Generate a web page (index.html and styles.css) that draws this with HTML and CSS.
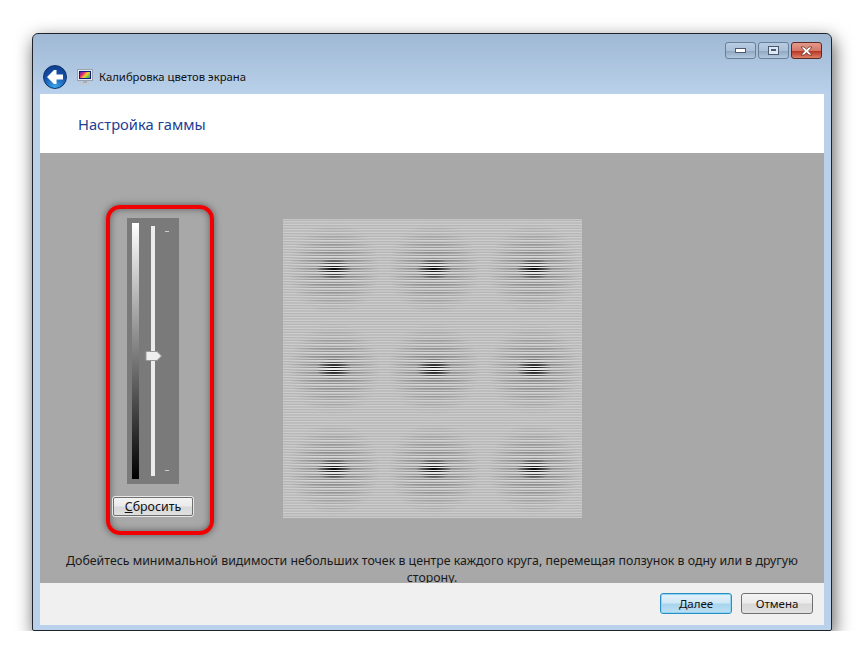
FILE: index.html
```html
<!DOCTYPE html>
<html lang="ru">
<head>
    <meta charset="UTF-8">
    <title>Калибровка цветов экрана</title>
    <link rel="stylesheet" href="styles.css">
</head>
<body>
    <div class="window">
        <div class="caption-buttons">
            <div class="cap-btn">
                <svg width="11" height="5" viewBox="0 0 11 5"><rect x="0.5" y="0.5" width="10" height="4" fill="#fff" stroke="#4a5a70"/></svg>
            </div>
            <div class="cap-btn">
                <svg width="11" height="9" viewBox="0 0 11 9"><rect x="0.5" y="0.5" width="10" height="8" fill="#dfe8f2" stroke="#4a5a70"/><rect x="3" y="3" width="5" height="2" fill="#4a5a70"/></svg>
            </div>
            <div class="cap-btn close">
                <svg width="13" height="10" viewBox="0 0 13 10"><path d="M1 1h3l2.500 2.300L9 1h3L8.500 5 12 9H9L6.500 6.700 4 9H1l3.500-4z" fill="#fff" stroke="#5c2a24" stroke-width="0.7"/></svg>
            </div>
        </div>
        <div class="nav-row">
            <div class="back-btn">
                <svg width="18" height="16" viewBox="0 0 18 16"><path d="M8 1 1 8l7 7h2.500V10.500H17v-5H10.500V1z" fill="#fff"/></svg>
            </div>
            <svg class="app-icon" width="16" height="16" viewBox="0 0 16 16">
                <defs>
                    <linearGradient id="rainbow" x1="0" y1="0" x2="1" y2="0.6">
                        <stop offset="0" stop-color="#2030d0"/>
                        <stop offset="0.35" stop-color="#e02070"/>
                        <stop offset="0.65" stop-color="#f0d030"/>
                        <stop offset="1" stop-color="#30c050"/>
                    </linearGradient>
                </defs>
                <rect x="0.5" y="0.500" width="15" height="11" fill="#e8ebee" stroke="#9aa2ac"/>
                <rect x="2.500" y="2.500" width="11" height="7" fill="url(#rainbow)" stroke="#101c80"/>
                <rect x="6" y="12" width="4" height="2" fill="#a8aeb4"/>
                <rect x="3" y="14" width="10" height="1.500" fill="#c4c8cc"/>
            </svg>
            <span class="app-title">Калибровка цветов экрана</span>
        </div>
        <div class="client">
            <div class="page-head">
                <h1>Настройка гаммы</h1>
            </div>
            <div class="stage">
                <div class="stage-row">
                    <div class="highlight">
                        <div class="slider-panel">
                            <div class="ramp"></div>
                            <div class="track">
                                <svg class="thumb" width="17" height="10" viewBox="0 0 17 10"><path d="M1 0.500h11l4.500 4.500L12 9.500H1z" fill="#eee" stroke="#999"/></svg>
                            </div>
                            <div class="ticks"><i></i><i></i></div>
                        </div>
                        <button class="btn reset"><u>С</u>бросить</button>
                    </div>
                    <div class="pattern">
                        <div class="dots"></div>
                    </div>
                </div>
                <p class="hint">Добейтесь минимальной видимости небольших точек в центре каждого круга, перемещая ползунок в одну или в другую сторону.</p>
            </div>
            <div class="footer">
                <button class="btn primary">Далее</button>
                <button class="btn">Отмена</button>
            </div>
        </div>
    </div>
</body>
</html>
```

FILE: styles.css
```css
body {
    margin: 0;
    background: #fff;
    font-family: "Noto Sans", "Open Sans", sans-serif;
    font-size: 12px;
    color: #1a1a1a;
}

.window {
    position: relative;
    box-sizing: border-box;
    width: 800px;
    height: 598px;
    margin: 33px 0 0 32px;
    padding: 0 7px 6px 7px;
    border: 1px solid #20242a;
    border-radius: 6px 6px 2px 2px;
    background: linear-gradient(#9fb8d4 0, #b9d1ea 60px, #b9d1ea 100%);
    box-shadow: 2px 6px 18px rgba(0, 0, 0, 0.65);
}

.caption-buttons {
    position: absolute;
    top: 8px;
    right: 9px;
    display: flex;
    gap: 2px;
}

.cap-btn {
    box-sizing: border-box;
    width: 31px;
    height: 17px;
    display: flex;
    align-items: center;
    justify-content: center;
    border: 1px solid #6a7f98;
    border-radius: 3px;
    background: linear-gradient(#b8cce2 0, #abc0d8 50%, #92a8c0 55%, #b2c8e0 100%);
}

.cap-btn.close {
    border-color: #5c2a24;
    background: linear-gradient(#e59a8a 0, #d4786a 50%, #bb3522 55%, #dc8068 100%);
}

.nav-row {
    display: flex;
    align-items: center;
    height: 60px;
    padding-top: 25px;
    box-sizing: border-box;
    margin-left: 3px;
}

.back-btn {
    box-sizing: border-box;
    width: 24px;
    height: 24px;
    display: flex;
    align-items: center;
    justify-content: center;
    border-radius: 50%;
    border: 1px solid #0c3268;
    background: radial-gradient(circle at 50% 95%, #38a8f0 0, #1650a8 55%, #0c3a88 100%);
}

.app-icon {
    margin-left: 10px;
}

.app-title {
    margin-left: 6px;
    font-size: 11.3px;
    color: #111;
}

.client {
    display: flex;
    flex-direction: column;
    height: 531px;
}

.page-head {
    height: 59px;
    background: #fff;
    display: flex;
    align-items: center;
    padding-left: 38px;
}

h1 {
    margin: 0;
    font-size: 14.7px;
    font-weight: normal;
    color: #1c3f94;
}

.stage {
    height: 430px;
    overflow: hidden;
    background: #a8a8a8;
}

.stage-row {
    display: flex;
    align-items: flex-start;
    padding: 52px 0 0 66px;
}

.highlight {
    box-sizing: border-box;
    width: 108px;
    height: 330px;
    padding: 9px 0 0 2px;
    display: flex;
    flex-direction: column;
    align-items: flex-start;
    border: 4px solid #f00000;
    border-radius: 14px;
    box-shadow: 0 0 7px rgba(0, 0, 0, 0.5), inset 0 0 7px rgba(0, 0, 0, 0.45);
}

.slider-panel {
    position: relative;
    width: 52px;
    height: 266px;
    margin-left: 15px;
    background: #7a7a7a;
}

.ramp {
    position: absolute;
    left: 5px;
    top: 5px;
    width: 7px;
    height: 256px;
    background: linear-gradient(#fff, #000);
}

.track {
    position: absolute;
    left: 24px;
    top: 8px;
    width: 4px;
    height: 250px;
    background: #ececec;
}

.thumb {
    position: absolute;
    left: -6px;
    top: 125px;
}

.ticks {
    position: absolute;
    left: 38px;
    top: 13px;
    height: 240px;
    width: 4px;
    display: flex;
    flex-direction: column;
    justify-content: space-between;
}

.ticks i {
    display: block;
    height: 1px;
    background: #ccc;
}

.btn {
    box-sizing: border-box;
    width: 72px;
    height: 21px;
    padding: 0;
    border: 1px solid #707070;
    border-radius: 3px;
    background: linear-gradient(#f4f4f4 0, #ebebeb 48%, #d8d8d8 52%, #e0e0e0 100%);
    font-family: inherit;
    font-size: 11.5px;
    color: #111;
}

.reset {
    width: 82px;
    margin-top: 12px;
    font-size: 12.4px;
    border-color: #e8e8e8;
    outline: 1px solid #707070;
    outline-offset: -2px;
}

.primary {
    border-color: #2c8fc4;
    box-shadow: inset 0 0 0 1px #8fd4f0;
    background: linear-gradient(#e4f2fa 0, #cfe7f6 48%, #a8d4ee 52%, #bcdff2 100%);
}

.pattern {
    width: 299px;
    height: 299px;
    margin: 14px 0 0 69px;
    background: repeating-linear-gradient(#d0d0d0 0, #b2b2b2 1.333px, #d0d0d0 2.667px);
}

.dots {
    width: 100%;
    height: 100%;
    background: repeating-linear-gradient(#f8f8f8 0 1.2px, #000 1.2px 2.667px);
    -webkit-mask-image: radial-gradient(ellipse 18px 11px at 50% 50%, #000 0, transparent 100%), radial-gradient(circle 46px at 50% 50%, rgba(0, 0, 0, 0.3) 0, rgba(0, 0, 0, 0.17) 55%, transparent 100%);
    mask-image: radial-gradient(ellipse 18px 11px at 50% 50%, #000 0, transparent 100%), radial-gradient(circle 46px at 50% 50%, rgba(0, 0, 0, 0.3) 0, rgba(0, 0, 0, 0.17) 55%, transparent 100%);
    -webkit-mask-size: 100px 100px;
    mask-size: 100px 100px;
    -webkit-mask-position: 1px 0;
    mask-position: 1px 0;
}

.hint {
    margin: 17px 20px 0 20px;
    text-align: center;
    font-size: 12.35px;
    line-height: 17px;
    color: #1a1a1a;
}

.footer {
    flex: 1;
    display: flex;
    justify-content: flex-end;
    gap: 9px;
    padding: 10px 11px 0 0;
    background: #f0f0f0;
}
```
